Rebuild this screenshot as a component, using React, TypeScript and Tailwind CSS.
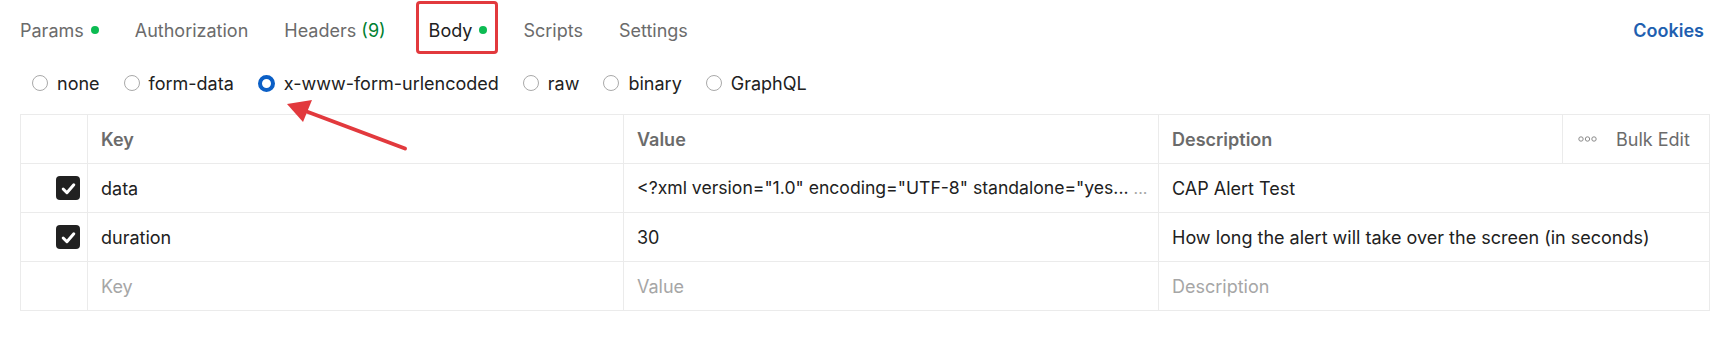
import React from "react";

function Radio({ checked, label }: { checked?: boolean; label: string }) {
  return (
    <div className="flex items-center gap-[9px]">
      {checked ? (
        <span className="w-[17px] h-[17px] rounded-full border-[4px] border-[#0b5fc6] bg-white box-border" />
      ) : (
        <span className="w-[16px] h-[16px] rounded-full border border-[#a9a9a9] bg-white box-border" />
      )}
      <span className="text-[#212121]">{label}</span>
    </div>
  );
}

function Check() {
  return (
    <span className="w-[24px] h-[24px] rounded-[4px] bg-[#212121] flex items-center justify-center">
      <svg width="17" height="17" viewBox="0 0 16 16" fill="none">
        <path d="M3 8.5 L6.5 12 L13 4.5" stroke="white" strokeWidth="2.8" strokeLinecap="round" strokeLinejoin="round" />
      </svg>
    </span>
  );
}

export default function App() {
  const cell = "border-r border-b border-[#ebebeb] h-[49px] flex items-center";
  return (
    <div className="relative w-[1726px] h-[361px] bg-white font-['Inter',sans-serif] text-[18px] overflow-hidden">
      {/* tabs */}
      <div className="flex items-center justify-between h-[60px] pl-[20px] pr-[22px]">
        <div className="flex items-center gap-[36px] text-[18px] text-[#6b6b6b]">
          <span className="flex items-center gap-[7px]">
            Params <span className="w-[8px] h-[8px] rounded-full bg-[#0cbb52]" />
          </span>
          <span>Authorization</span>
          <span>
            Headers <span className="text-[#007f31]">(9)</span>
          </span>
          <span className="flex items-center gap-[7px] text-[#212121] ml-[7px]">
            Body <span className="w-[8px] h-[8px] rounded-full bg-[#0cbb52]" />
          </span>
          <span>Scripts</span>
          <span>Settings</span>
        </div>
        <span className="text-[18px] font-semibold text-[#1f5fb0]">Cookies</span>
      </div>

      {/* radios */}
      <div className="flex items-center h-[46px] pl-[32px] gap-[24px] text-[18px]">
        <Radio label="none" />
        <Radio label="form-data" />
        <Radio checked label="x-www-form-urlencoded" />
        <Radio label="raw" />
        <Radio label="binary" />
        <Radio label="GraphQL" />
      </div>

      {/* table */}
      <div className="ml-[20px] mt-[8px] w-[1690px] border-t border-l border-[#ebebeb] grid grid-cols-[67px_536px_535px_551px] text-[18px]">
        {/* header */}
        <div className={cell} />
        <div className={`${cell} pl-[13px] font-semibold text-[#6b6b6b]`}>Key</div>
        <div className={`${cell} pl-[13px] font-semibold text-[#6b6b6b]`}>Value</div>
        <div className={`${cell} justify-between`}>
          <span className="pl-[13px] font-semibold text-[#6b6b6b]">Description</span>
          <div className="h-full w-[147px] border-l border-[#ebebeb] flex items-center pl-[15px] gap-[19px] text-[#6b6b6b]">
            <svg width="19" height="6" viewBox="0 0 19 6" fill="none">
              <circle cx="3" cy="3" r="2.2" stroke="#8a8a8a" strokeWidth="1" />
              <circle cx="9.5" cy="3" r="2.2" stroke="#8a8a8a" strokeWidth="1" />
              <circle cx="16" cy="3" r="2.2" stroke="#8a8a8a" strokeWidth="1" />
            </svg>
            <span>Bulk Edit</span>
          </div>
        </div>

        {/* row 1 */}
        <div className={`${cell} justify-end pr-[7px]`}>
          <Check />
        </div>
        <div className={`${cell} pl-[13px] text-[#212121]`}>data</div>
        <div className={`${cell} pl-[13px] pr-[6px] gap-[5px] text-[#212121] overflow-hidden`}>
          <span className="whitespace-nowrap text-[17.6px]">{'<?xml version="1.0" encoding="UTF-8" standalone="yes...'}</span>
          <span className="text-[#a6a6a6] text-[16px]">...</span>
        </div>
        <div className={`${cell} pl-[13px] text-[#212121]`}>CAP Alert Test</div>

        {/* row 2 */}
        <div className={`${cell} justify-end pr-[7px]`}>
          <Check />
        </div>
        <div className={`${cell} pl-[13px] text-[#212121]`}>duration</div>
        <div className={`${cell} pl-[13px] text-[#212121]`}>30</div>
        <div className={`${cell} pl-[13px] text-[#212121]`}>
          How long the alert will take over the screen (in seconds)
        </div>

        {/* row 3 placeholders */}
        <div className={cell} />
        <div className={`${cell} pl-[13px] text-[#a6a6a6]`}>Key</div>
        <div className={`${cell} pl-[13px] text-[#a6a6a6]`}>Value</div>
        <div className={`${cell} pl-[13px] text-[#a6a6a6]`}>Description</div>
      </div>

      {/* annotation: red box around Body */}
      <div className="absolute left-[416px] top-[1px] w-[82px] h-[53px] border-[3px] border-[#e2393d] rounded-[4px] pointer-events-none" />

      {/* annotation: red arrow */}
      <svg className="absolute left-0 top-0 pointer-events-none" width="1726" height="361" viewBox="0 0 1726 361">
        <line x1="405" y1="148.5" x2="300" y2="109" stroke="#e2393d" strokeWidth="4" strokeLinecap="round" />
        <polygon points="287,104 312,100 303,122" fill="#e2393d" />
      </svg>
    </div>
  );
}
